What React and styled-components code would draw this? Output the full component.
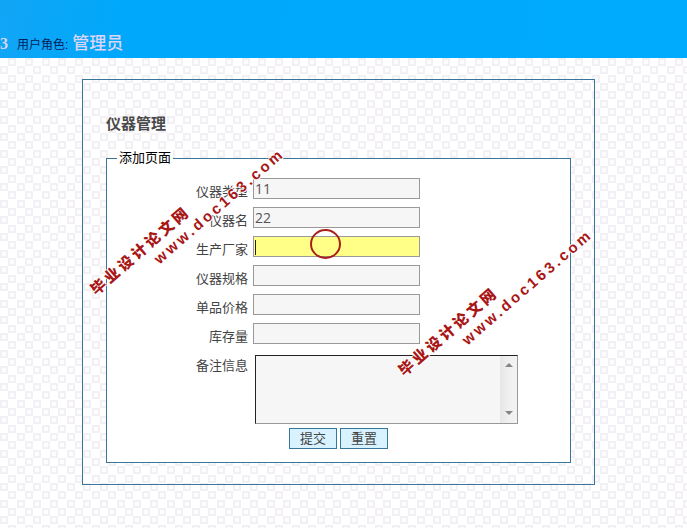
import React from 'react';
import styled, { createGlobalStyle } from 'styled-components';

const tile = `<svg xmlns="http://www.w3.org/2000/svg" width="50" height="50" fill="#fefdfe" stroke="#f2f0f5" stroke-width="2">${
    [0, 8, 17, 25, 33, 42].map((y, row) =>
        (row % 2 ? [0, 17, 33] : [8, 25, 42]).map((x) =>
            `<rect x="${x + 1}" y="${y + 1}" width="6" height="6"/>`
        ).join('')
    ).join('')
}</svg>`;

const GlobalStyle = createGlobalStyle`
    * {
        box-sizing: border-box;
    }
    body {
        margin: 0;
        min-height: 100vh;
        background: #fff url("data:image/svg+xml,${encodeURIComponent(tile)}") 0 8px;
        font-family: "Liberation Sans", "Noto Sans CJK SC", sans-serif;
        font-size: 13px;
        color: #444;
    }
`;

const Page = styled.div`
    position: relative;
    overflow: hidden;
    padding-bottom: 43px;
`;

const Header = styled.header`
    display: flex;
    align-items: baseline;
    height: 58px;
    padding-top: 32px;
    background: linear-gradient(100deg, #12a5f5 0, #00a8fb 120px, #00aafd 100%);
    line-height: 24px;
    white-space: nowrap;
`;

const UserName = styled.b`
    margin-right: 9px;
    font-family: "Liberation Serif", serif;
    font-size: 16px;
    color: #d6d6f4;
`;

const RoleLabel = styled.span`
    margin-right: 4px;
    font-size: 12px;
    color: #06205c;
`;

const Role = styled.b`
    font-size: 17px;
    font-weight: 500;
    color: #dcd5f5;
`;

const Panel = styled.main`
    margin: 21px 92px 0 82px;
    padding: 34px 23px 21px;
    border: 1px solid #39779a;
`;

const Title = styled.h1`
    margin: 0 0 16px;
    font-size: 15px;
    line-height: 20px;
    font-weight: bold;
    color: #4a4a4a;
`;

const Fieldset = styled.fieldset`
    min-width: 0;
    margin: 0;
    padding: 12px 0 13px;
    border: 1px solid #39779a;
    background: #fff;
`;

const Legend = styled.legend`
    margin-left: 10px;
    padding: 0 2px;
    background: #fff;
    line-height: 16px;
    color: #000;
`;

const Rows = styled.div`
    display: grid;
    gap: 5px;
`;

const Row = styled.div`
    display: grid;
    grid-template-columns: 141px 1fr;
    column-gap: 5px;
    align-items: start;
    min-height: 24px;
`;

const Label = styled.label`
    padding-top: 4px;
    line-height: 20px;
    text-align: right;
`;

const Input = styled.input`
    width: 167px;
    height: 21px;
    padding: 0 1px;
    border: 1px solid #999;
    border-radius: 0;
    outline: none;
    background: ${(props) => props.$active
        ? 'linear-gradient(#222, #222) 1px 3px / 1px 15px no-repeat #ffff88'
        : '#f6f6f6'};
    caret-color: transparent;
    font-family: "Open Sans", "Noto Sans CJK SC", sans-serif;
    font-size: 14px;
    color: #555;
`;

const NoteBox = styled.div`
    display: flex;
    width: 263px;
    height: 69px;
    margin: 3px 0 0 2px;
    border: 1px solid #999;
    border-top-color: #222;
    border-left-color: #222;
    background: #f6f6f6;
`;

const Note = styled.textarea`
    flex: 1;
    min-width: 0;
    padding: 2px;
    border: 0;
    outline: none;
    resize: none;
    overflow: hidden;
    background: transparent;
    font-family: inherit;
    font-size: 13px;
    color: #555;
`;

const Track = styled.div`
    display: flex;
    flex-direction: column;
    justify-content: space-between;
    align-items: center;
    width: 17px;
    padding: 7px 0;
    background: linear-gradient(90deg, #e6e6e6, #efeff0 8px, #f3f1f4);
`;

const Buttons = styled.div`
    display: flex;
    justify-content: center;
    gap: 3px;
    margin-top: 4px;
`;

const Button = styled.button`
    width: 48px;
    height: 21px;
    padding: 0;
    border: 1px solid #39779a;
    border-radius: 0;
    background: #d8f3ff;
    font-family: inherit;
    font-size: 13px;
    line-height: 18px;
    color: #444;
`;

// stamped diagonally over the page
const Watermark = styled.div`
    position: absolute;
    left: ${(props) => props.$x}px;
    top: ${(props) => props.$y}px;
    transform: rotate(-41deg);
    transform-origin: 0 9px;
    font-size: 15px;
    line-height: 18px;
    font-weight: 900;
    letter-spacing: 3px;
    white-space: nowrap;
    color: #a81616;
    text-shadow: 1px 0 #fff, -1px 0 #fff, 0 1px #fff, 0 -1px #fff;
    pointer-events: none;
`;

const Site = styled.div`
    padding-left: 68px;
`;

const Pointer = styled.div`
    position: absolute;
    left: 310px;
    top: 229px;
    width: 31px;
    height: 30px;
    border: 2px solid #a82018;
    border-radius: 50%;
    pointer-events: none;
`;

const fields = [
    { id: 'type', label: '仪器类型', value: '11' },
    { id: 'name', label: '仪器名', value: '22' },
    { id: 'maker', label: '生产厂家', value: '', active: true },
    { id: 'spec', label: '仪器规格', value: '' },
    { id: 'price', label: '单品价格', value: '' },
    { id: 'stock', label: '库存量', value: '' },
];

const stamps = [[93, 283], [401, 364]];

const App = () => {

    return (
        <>
            <GlobalStyle />
            <Page>
                <Header>
                    <UserName>3</UserName>
                    <RoleLabel>用户角色:</RoleLabel>
                    <Role>管理员</Role>
                </Header>
                <Panel>
                    <Title>仪器管理</Title>
                    <form onSubmit={(e) => e.preventDefault()}>
                        <Fieldset>
                            <Legend>添加页面</Legend>
                            <Rows>
                                {fields.map((f) => (
                                    <Row key={f.id}>
                                        <Label htmlFor={f.id}>{f.label}</Label>
                                        <Input id={f.id} type="text" defaultValue={f.value} $active={f.active} />
                                    </Row>
                                ))}
                                <Row>
                                    <Label htmlFor="note">备注信息</Label>
                                    <NoteBox>
                                        <Note id="note" />
                                        <Track>
                                            <svg width="8" height="5" viewBox="0 0 8 5"><path d="M4 0 8 4H0Z" fill="#858585" /></svg>
                                            <svg width="8" height="5" viewBox="0 0 8 5"><path d="M0 0H8L4 4Z" fill="#858585" /></svg>
                                        </Track>
                                    </NoteBox>
                                </Row>
                            </Rows>
                            <Buttons>
                                <Button type="submit">提交</Button>
                                <Button type="reset">重置</Button>
                            </Buttons>
                        </Fieldset>
                    </form>
                </Panel>
                {stamps.map(([x, y]) => (
                    <Watermark key={x} $x={x} $y={y}>
                        <div>毕业设计论文网</div>
                        <Site>www.doc163.com</Site>
                    </Watermark>
                ))}
                <Pointer />
            </Page>
        </>
    );
};

export default App;
